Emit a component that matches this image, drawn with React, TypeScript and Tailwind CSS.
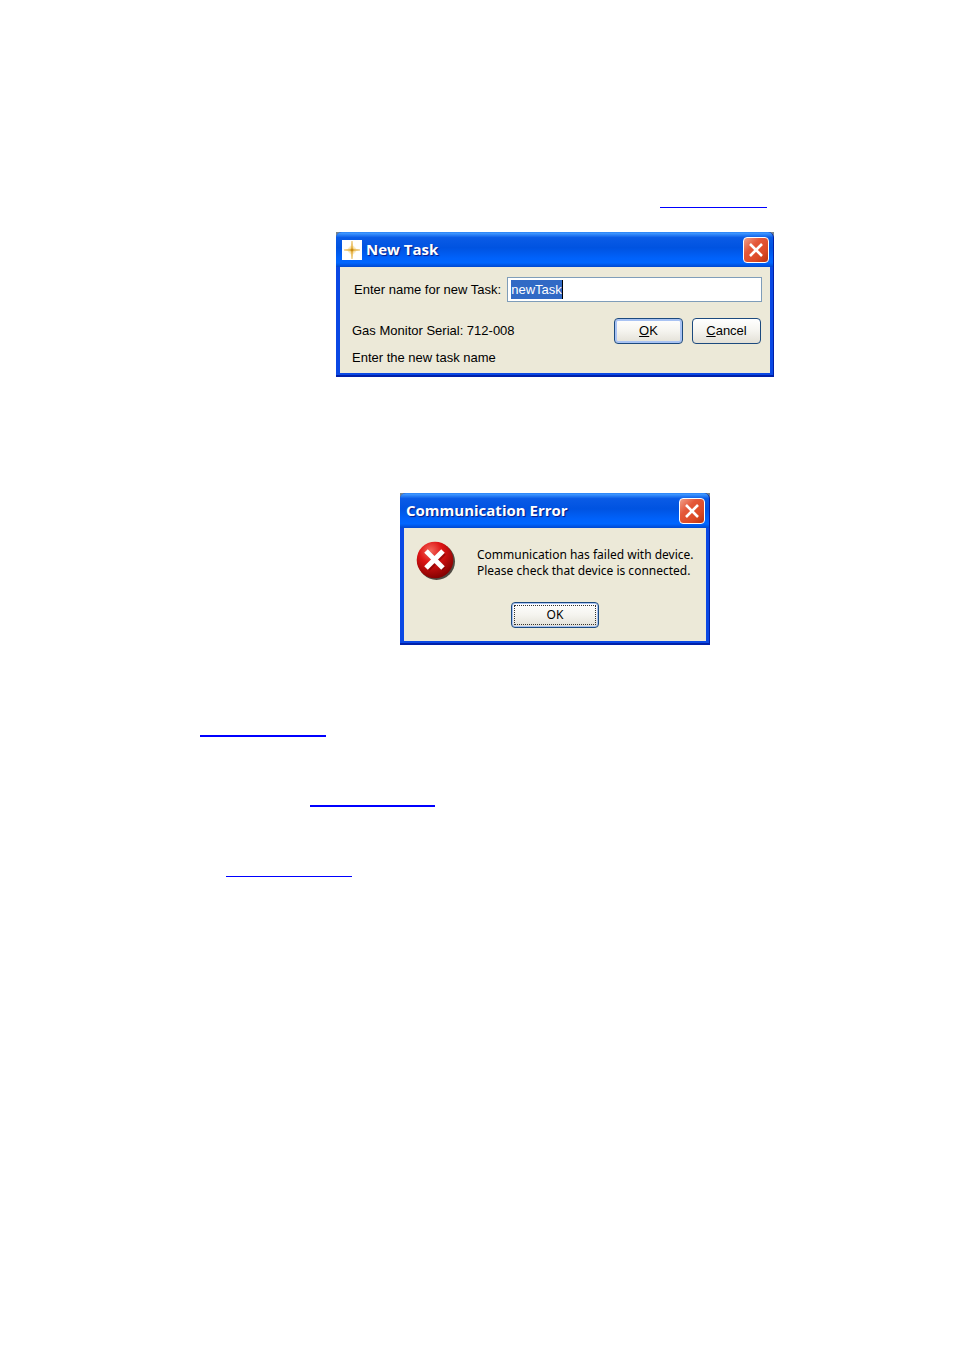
import React, { useState } from 'react';

const formFont = "font-['Liberation_Sans',Arial,sans-serif]";
const messageFont = "font-['Noto_Sans','Open_Sans',sans-serif]";

function CloseIcon() {
    return (
        <svg viewBox="0 0 24 24" className="h-full w-full" aria-hidden="true">
            <path d="M6 6 L18 18 M18 6 L6 18" stroke="#ffffff" strokeWidth="2.6" fill="none" />
        </svg>
    );
}

function SparkIcon() {
    return (
        <svg viewBox="0 0 20 20" className="h-5 w-5 shrink-0 bg-white" aria-hidden="true">
            <circle cx="10" cy="10" r="4" fill="#fbeecb" />
            <path d="M10 1 L11.1 8.9 L18 10 L11.1 11.1 L10 19 L8.9 11.1 L2 10 L8.9 8.9 Z" fill="#e0a52c" stroke="#ecc46a" strokeWidth="0.7" />
            <circle cx="10" cy="10" r="1.3" fill="#c98a14" />
        </svg>
    );
}

function ErrorIcon() {
    return (
        <svg viewBox="0 0 40 40" className="h-10 w-10 shrink-0" aria-hidden="true">
            <defs>
                <radialGradient id="errorFill" cx="0.38" cy="0.25" r="0.8">
                    <stop offset="0" stopColor="#f4695c" />
                    <stop offset="0.4" stopColor="#dd1414" />
                    <stop offset="1" stopColor="#7c0000" />
                </radialGradient>
                <filter id="errorShadow">
                    <feGaussianBlur stdDeviation="0.7" />
                </filter>
            </defs>
            <circle cx="20.5" cy="20.5" r="18.5" fill="#504a42" filter="url(#errorShadow)" />
            <circle cx="19" cy="19" r="18.3" fill="url(#errorFill)" />
            <path d="M11 11 L27 27 M27 11 L11 27" stroke="#6d0000" strokeWidth="5" opacity="0.5" transform="translate(1 1)" />
            <path d="M10 10 L27 27 M27 10 L10 27" stroke="#ffffff" strokeWidth="5" />
        </svg>
    );
}

type DialogProps = {
    title: string;
    icon?: React.ReactNode;
    className: string;
    children: React.ReactNode;
};

function Dialog({ title, icon, className, children }: DialogProps) {
    return (
        <div className={`mx-auto w-full bg-[#77858c] ${className}`}>
            <section role="dialog" aria-label={title} className="overflow-hidden rounded-t-md border-r border-b-2 border-r-[#0020a8] border-b-[#0020a8] bg-[#0a3fd8]">
                <header className="flex h-[35px] items-center gap-1 bg-[linear-gradient(to_bottom,#2a83f5_0%,#3d95ff_4%,#0a5be6_16%,#0053e1_45%,#0062fb_75%,#0066ff_88%,#0048cf_100%)] pr-1 pl-[6px]">
                    {icon}
                    <h2 className="grow font-['Open_Sans','Noto_Sans',sans-serif] text-[15px] font-bold text-white [text-shadow:1px_1px_1px_#0a1883]">{title}</h2>
                    <button
                        type="button"
                        aria-label="Close"
                        className="h-[26px] w-[26px] shrink-0 rounded-[4px] border border-white bg-[linear-gradient(135deg,#f0a08a_0%,#e4583a_35%,#dc4a26_70%,#b8330f_100%)]"
                    >
                        <CloseIcon />
                    </button>
                </header>
                <div className="border-r-3 border-b-2 border-l-4 border-[#0a48e4] bg-[#ece9d8]">{children}</div>
            </section>
        </div>
    );
}

const buttonBase = 'h-[26px] rounded-[4px] border border-[#1c4a7e] bg-gradient-to-b from-white via-[#f5f4ef] to-[#e3e0d6] text-black';

export default function App() {
    const [taskName, setTaskName] = useState('newTask');

    return (
        <main className="min-h-screen bg-white pt-[190px] pr-11 pb-20 pl-[200px]">
            <a href="#new-task" aria-label="New task" className="ml-[460px] block h-[18px] w-[107px] border-b border-[#0000ff]" />

            <Dialog title="New Task" icon={<SparkIcon />} className="mt-6 max-w-[438px]">
                <form onSubmit={(e) => e.preventDefault()} className={`px-2 pt-[10px] pb-[5px] text-[13px] text-black ${formFont}`}>
                    <div className="flex items-center gap-[6px] pl-[6px]">
                        <label htmlFor="task-name" className="shrink-0 whitespace-nowrap">Enter name for new Task:</label>
                        <div className="flex h-[25px] min-w-0 grow items-center border border-[#7f9db9] bg-white pl-[3px]">
                            <input
                                id="task-name"
                                value={taskName}
                                onChange={(e) => setTaskName(e.target.value)}
                                className="h-[19px] field-sizing-content border-r border-black bg-[#316ac5] text-white outline-none"
                            />
                        </div>
                    </div>
                    <div className="mt-4 flex items-center">
                        <p className="grow pl-1">Gas Monitor Serial: 712-008</p>
                        <div className="flex gap-[9px] pr-px">
                            <button type="submit" className={`w-[69px] shadow-[inset_0_0_0_2px_#a9c3f3] ${buttonBase}`}>
                                <u>O</u>K
                            </button>
                            <button type="button" className={`w-[69px] ${buttonBase}`}>
                                <u>C</u>ancel
                            </button>
                        </div>
                    </div>
                    <p className="mt-1 pl-1 leading-5">Enter the new task name</p>
                </form>
            </Dialog>

            <Dialog title="Communication Error" className="mt-[116px] max-w-[310px]">
                <div className={`px-3 pt-[13px] pb-[13px] text-xs text-black ${messageFont}`}>
                    <div className="flex items-center gap-[21px]">
                        <ErrorIcon />
                        <p className="pt-1 leading-4 whitespace-nowrap">
                            Communication has failed with device.
                            <br />
                            Please check that device is connected.
                        </p>
                    </div>
                    <div className="mt-[21px] flex justify-center">
                        <button type="button" className={`w-[88px] p-[2px] shadow-[inset_0_0_0_1px_#a9c3f3] ${buttonBase}`}>
                            <span className="flex h-full items-center justify-center border border-dotted border-[#333333]">OK</span>
                        </button>
                    </div>
                </div>
            </Dialog>

            <nav aria-label="See also" className="mt-[72px] flex flex-col gap-[50px]">
                <a href="#device-setup" aria-label="Device setup" className="block h-5 w-[126px] border-b-2 border-[#0000ff]" />
                <a href="#connection" aria-label="Connection" className="ml-[110px] block h-5 w-[125px] border-b-2 border-[#0000ff]" />
                <a href="#tasks" aria-label="Tasks" className="ml-[26px] block h-5 w-[126px] border-b border-[#0000ff]" />
            </nav>
        </main>
    );
}
